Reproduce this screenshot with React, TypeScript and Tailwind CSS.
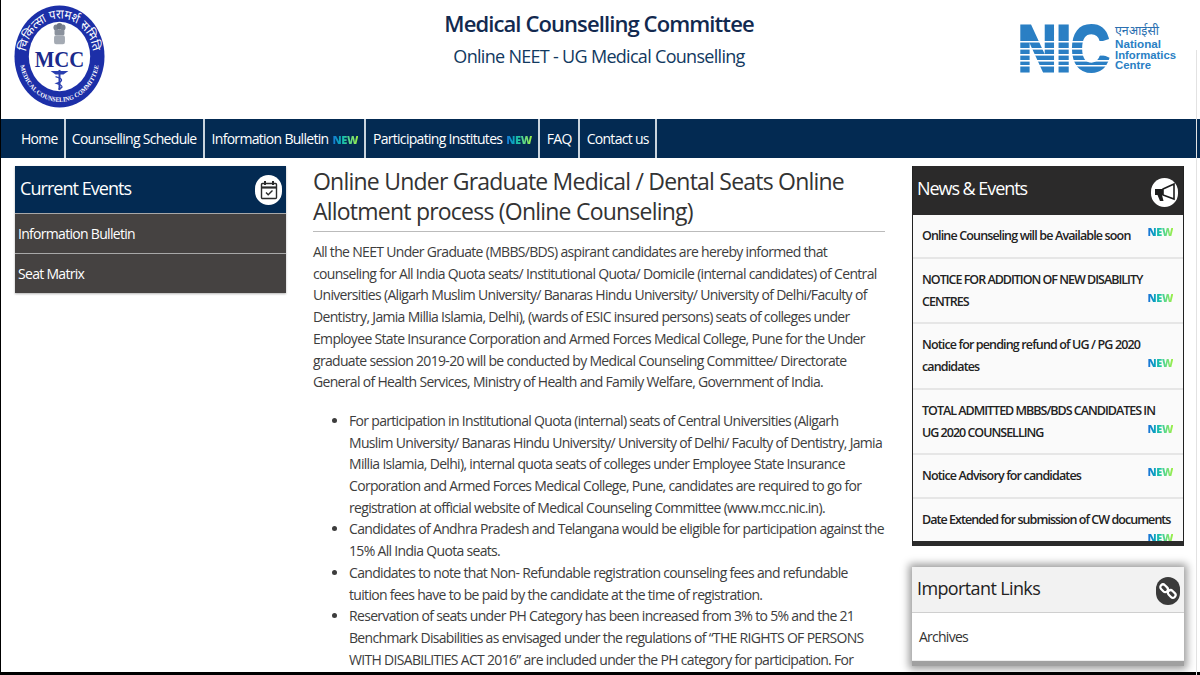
const font = { fontFamily: '"Open Sans", "Noto Sans", sans-serif' };

const navLinks = [
    { label: 'Home', pad: 'pl-[20px]' },
    { label: 'Counselling Schedule', pad: 'pl-[6px]' },
    { label: 'Information Bulletin', pad: 'pl-[7px]', isNew: true },
    { label: 'Participating Institutes', pad: 'pl-[7px]', isNew: true },
    { label: 'FAQ', pad: 'pl-[7px]' },
    { label: 'Contact us', pad: 'pl-[7px]' },
];

const news = [
    { lines: ['Online Counseling will be Available soon'], h: 'h-[44px]', tag: 'top-[11px]', track: 'tracking-[-0.85px]' },
    { lines: ['NOTICE FOR ADDITION OF NEW DISABILITY', 'CENTRES'], h: 'h-[65px]', tag: 'top-[33px]', track: 'tracking-[-1px]' },
    { lines: ['Notice for pending refund of UG / PG 2020', 'candidates'], h: 'h-[66px]', tag: 'top-[33px]', track: 'tracking-[-0.86px]' },
    { lines: ['TOTAL ADMITTED MBBS/BDS CANDIDATES IN', 'UG 2020 COUNSELLING'], h: 'h-[65px]', tag: 'top-[33px]', track: 'tracking-[-1px]' },
    { lines: ['Notice Advisory for candidates'], h: 'h-[44px]', tag: 'top-[11px]', track: 'tracking-[-0.85px]' },
    { lines: ['Date Extended for submission of CW documents'], h: 'h-[44px]', tag: 'top-[33px]', track: 'tracking-[-0.95px]' },
];

const bullets = [
    [
        'For participation in Institutional Quota (internal) seats of Central Universities (Aligarh',
        'Muslim University/ Banaras Hindu University/ University of Delhi/ Faculty of Dentistry, Jamia',
        'Millia Islamia, Delhi), internal quota seats of colleges under Employee State Insurance',
        'Corporation and Armed Forces Medical College, Pune, candidates are required to go for',
        'registration at official website of Medical Counseling Committee (www.mcc.nic.in).',
    ],
    [
        'Candidates of Andhra Pradesh and Telangana would be eligible for participation against the',
        '15% All India Quota seats.',
    ],
    [
        'Candidates to note that Non- Refundable registration counseling fees and refundable',
        'tuition fees have to be paid by the candidate at the time of registration.',
    ],
    [
        'Reservation of seats under PH Category has been increased from 3% to 5% and the 21',
        'Benchmark Disabilities as envisaged under the regulations of “THE RIGHTS OF PERSONS',
        'WITH DISABILITIES ACT 2016” are included under the PH category for participation. For',
    ],
];

const intro = [
    'All the NEET Under Graduate (MBBS/BDS) aspirant candidates are hereby informed that',
    'counseling for All India Quota seats/ Institutional Quota/ Domicile (internal candidates) of Central',
    'Universities (Aligarh Muslim University/ Banaras Hindu University/ University of Delhi/Faculty of',
    'Dentistry, Jamia Millia Islamia, Delhi), (wards of ESIC insured persons) seats of colleges under',
    'Employee State Insurance Corporation and Armed Forces Medical College, Pune for the Under',
    'graduate session 2019-20 will be conducted by Medical Counseling Committee/ Directorate',
    'General of Health Services, Ministry of Health and Family Welfare, Government of India.',
];

function NewTag({ className = '' }: { className?: string }) {
    return (
        <span className={`bg-gradient-to-r from-[#1d6fd8] via-[#22c9a0] to-[#9cf03c] bg-clip-text text-transparent text-[11px] leading-none font-extrabold tracking-[-0.4px] ${className}`}>
            NEW
        </span>
    );
}

function McLogo() {
    return (
        <svg width="91" height="103" viewBox="0 0 92 92" preserveAspectRatio="none" className="shrink-0">
            <defs>
                <path id="ringTop" d="M 12 46 A 34 34 0 0 1 80 46" />
                <path id="ringBottom" d="M 5.5 46 A 40.5 40.5 0 0 0 86.5 46" />
            </defs>
            <circle cx="46" cy="46" r="45.5" fill="#1c2fa8" />
            <circle cx="46" cy="46" r="31" fill="#fff" />
            <text fontSize="11.5" fill="#fff" fontFamily="'Noto Sans', sans-serif">
                <textPath href="#ringTop" startOffset="50%" textAnchor="middle">चिकित्सा परामर्श समिति</textPath>
            </text>
            <text fontSize="6" fontWeight="700" fill="#fff" fontFamily="'Liberation Serif', serif">
                <textPath href="#ringBottom" startOffset="50%" textAnchor="middle">MEDICAL COUNSELING COMMITTEE</textPath>
            </text>
            <text x="46" y="55" fontSize="21" fontWeight="700" fill="#1a2a8c" textAnchor="middle" fontFamily="'Liberation Serif', serif">MCC</text>
            {/* emblem */}
            <circle cx="42.5" cy="20" r="2.6" fill="#7a8290" />
            <circle cx="46" cy="19" r="3" fill="#6c7482" />
            <circle cx="49.5" cy="20" r="2.6" fill="#7a8290" />
            <rect x="41" y="22" width="10" height="5" rx="1" fill="#8a919c" />
            <rect x="40.5" y="27" width="11" height="8" rx="2" fill="#a4aab3" />
            {/* caduceus */}
            <path d="M37 59 H55 L50 62 H42 Z" fill="#2a3fb0" />
            <path d="M46 58 V76" stroke="#2a3fb0" strokeWidth="2" />
            <path d="M42 64 C50 66 50 68 43 70 C50 72 50 74 45 75" stroke="#2a3fb0" strokeWidth="1.2" fill="none" />
        </svg>
    );
}

function NicLogo() {
    return (
        <svg width="164" height="52" viewBox="-4 0 164 52">
            <text transform="translate(-3 49) scale(0.83 1)" fontSize="64" fontWeight="700" fill="#2a7fc4" stroke="#2a7fc4" strokeWidth="3" fontFamily="'Liberation Sans', sans-serif">NIC</text>
            <rect x="-4" y="19" width="95" height="1.5" fill="#fff" />
            <rect x="-4" y="26" width="95" height="1.6" fill="#fff" />
            <rect x="-4" y="32" width="95" height="1.6" fill="#fff" />
            <rect x="-4" y="38" width="95" height="1.6" fill="#fff" />
            <rect x="-4" y="43" width="95" height="1.5" fill="#fff" />
            <text x="94" y="13" fontSize="12.5" fill="#2a6fb0" fontFamily="'Noto Sans', sans-serif" textLength="44" lengthAdjust="spacingAndGlyphs">एनआईसी</text>
            <g fontSize="11.5" fontWeight="700" fill="#2a7fc4" fontFamily="'Liberation Sans', sans-serif">
                <text x="94" y="26" textLength="46" lengthAdjust="spacingAndGlyphs">National</text>
                <text x="94" y="36.5" textLength="61" lengthAdjust="spacingAndGlyphs">Informatics</text>
                <text x="94" y="47" textLength="36" lengthAdjust="spacingAndGlyphs">Centre</text>
            </g>
        </svg>
    );
}

function CalendarIcon() {
    return (
        <svg width="18" height="20" viewBox="0 0 18 20" fill="none" stroke="#2b2b2b" strokeWidth="1.4">
            <rect x="1.5" y="3.5" width="15" height="15" rx="1" />
            <path d="M1.5 7.5 H16.5" strokeWidth="2.2" />
            <path d="M5 1 V5 M13 1 V5" strokeWidth="2" />
            <path d="M6 12.5 L8.2 14.8 L12.5 10.5" />
        </svg>
    );
}

function MegaphoneIcon() {
    return (
        <svg width="22" height="20" viewBox="0 0 22 20">
            <path d="M1 7 H9 V13 H1 Z" fill="#1c1c1c" />
            <path d="M9 7 L20 2 V17 L9 13 Z" fill="none" stroke="#1c1c1c" strokeWidth="1.6" />
            <path d="M3.5 13 H8 L9.5 19 H6 Z" fill="#1c1c1c" />
        </svg>
    );
}

function ChainIcon() {
    return (
        <svg width="20" height="20" viewBox="0 0 20 20" fill="none" stroke="#fff" strokeWidth="2.2">
            <rect x="2" y="4.5" width="8.5" height="5.4" rx="2.7" transform="rotate(45 6.2 7)" />
            <rect x="9.5" y="10.3" width="8.5" height="5.4" rx="2.7" transform="rotate(45 13.8 13)" />
        </svg>
    );
}

export default function App() {
    return (
        <div className="h-[675px] w-[1200px] overflow-hidden bg-white border-l border-black relative" style={font}>
            {/* Header */}
            <header className="h-[119px] flex">
                <div className="flex-1 pl-[13px] pt-[5px]"><McLogo /></div>
                <div className="flex flex-col items-center pt-[7px] ml-[3px]">
                    <h1 className="text-[22px] leading-[32px] font-semibold text-[#12294f] tracking-[-0.9px] whitespace-nowrap">Medical Counselling Committee</h1>
                    <p className="text-[18px] leading-[32px] mt-[1px] text-[#12395f] tracking-[-0.7px] whitespace-nowrap">Online NEET - UG Medical Counselling</p>
                </div>
                <div className="flex-1 flex justify-end pt-[22px] pr-[19px]"><NicLogo /></div>
            </header>

            {/* Nav */}
            <nav className="h-[39px] bg-[#032a52] flex">
                {navLinks.map((link) => (
                    <a key={link.label} className={`h-full flex items-center gap-[4px] ${link.pad} pr-[6px] border-r-2 border-[#c9d4de] text-white text-[14px] tracking-[-0.7px] whitespace-nowrap`}>
                        {link.label}
                        {link.isNew && <NewTag className="mt-[2px]" />}
                    </a>
                ))}
            </nav>

            <main className="flex items-start pl-[14px] pt-[8px]">
                {/* Left column */}
                <aside className="w-[271px] shrink-0 shadow-[0_1px_2px_rgba(0,0,0,0.3)]">
                    <div className="h-[47px] bg-[#032a52] flex items-center justify-between pl-[5px] pr-[4px]">
                        <span className="text-white text-[18px] tracking-[-0.95px] -mt-[2px]">Current Events</span>
                        <span className="w-[27px] h-[30px] rounded-full bg-white flex items-center justify-center"><CalendarIcon /></span>
                    </div>
                    {['Information Bulletin', 'Seat Matrix'].map((label) => (
                        <div key={label} className="h-[40px] bg-[#454241] border-t border-[#a8a8a8] flex items-center pl-[3px] text-white text-[14px] tracking-[-0.7px]">
                            {label}
                        </div>
                    ))}
                </aside>

                {/* Middle column */}
                <section className="w-[572px] ml-[27px] shrink-0 text-[#3d3d3d]">
                    <h2 className="text-[23px] leading-[30px] tracking-[-0.78px] text-[#333] pb-[5px] border-b border-[#bbb] whitespace-nowrap">
                        Online Under Graduate Medical / Dental Seats Online<br />Allotment process (Online Counseling)
                    </h2>
                    <p className="mt-[9px] text-[14px] leading-[21.7px] tracking-[-0.68px] whitespace-nowrap">
                        {intro.map((line) => <span key={line} className="block">{line}</span>)}
                    </p>
                    <ul className="mt-[17px] pl-[36px] list-disc text-[14px] leading-[21.7px] tracking-[-0.68px] whitespace-nowrap">
                        {bullets.map((item) => (
                            <li key={item[0]}>
                                {item.map((line) => <span key={line} className="block">{line}</span>)}
                            </li>
                        ))}
                    </ul>
                </section>

                {/* Right column */}
                <aside className="w-[272px] ml-[27px] shrink-0">
                    <div className="h-[380px] border-x border-[#222] border-b-[5px] border-b-[#2b2b2b] flex flex-col overflow-hidden">
                        <div className="h-[49px] shrink-0 bg-[#2b2a2a] flex items-center justify-between pl-[4px] pr-[5px]">
                            <span className="text-white text-[18px] tracking-[-1.05px] -mt-[4px]">News &amp; Events</span>
                            <span className="w-[27px] h-[29px] rounded-full bg-white flex items-center justify-center mt-[3px]">
                                <MegaphoneIcon />
                            </span>
                        </div>
                        <div className="bg-[#fafafa]">
                            {news.map((n) => (
                                <div key={n.lines[0]} className={`${n.h} relative border-b-2 border-[#e6e6e6] last:border-b-0 pl-[9px] pt-[10px] text-[#222] text-[12.5px] font-semibold leading-[22px] ${n.track} whitespace-nowrap`}>
                                    {n.lines.map((l) => <span key={l} className="block">{l}</span>)}
                                    <NewTag className={`absolute right-[10px] ${n.tag}`} />
                                </div>
                            ))}
                        </div>
                    </div>

                    <div className="mt-[21px] h-[99px] bg-white shadow-[0_0_8px_3px_rgba(0,0,0,0.4)] border-b-[5px] border-b-[#a0a0a0] flex flex-col">
                        <div className="h-[46px] shrink-0 bg-[#f2f2f2] border-b border-[#cfcfcf] flex items-center justify-between pl-[5px] pr-[4px]">
                            <span className="text-[#222] text-[18px] tracking-[-0.62px] -mt-[2px]">Important Links</span>
                            <span className="w-[24px] h-[28px] rounded-full bg-[#3a3a3a] flex items-center justify-center mt-[3px]">
                                <ChainIcon />
                            </span>
                        </div>
                        <div className="flex-1 pl-[7px] pt-[14px] text-[14px] leading-[20px] tracking-[-0.75px] text-[#333] border-b border-[#eee]">Archives</div>
                    </div>
                </aside>
            </main>

            {/* page frame edges */}
            <div className="absolute left-0 right-0 bottom-0 h-[3px] bg-black" />
            <div className="absolute right-[3px] top-[50px] bottom-0 w-px bg-[#e2e2e2]" />
        </div>
    );
}
